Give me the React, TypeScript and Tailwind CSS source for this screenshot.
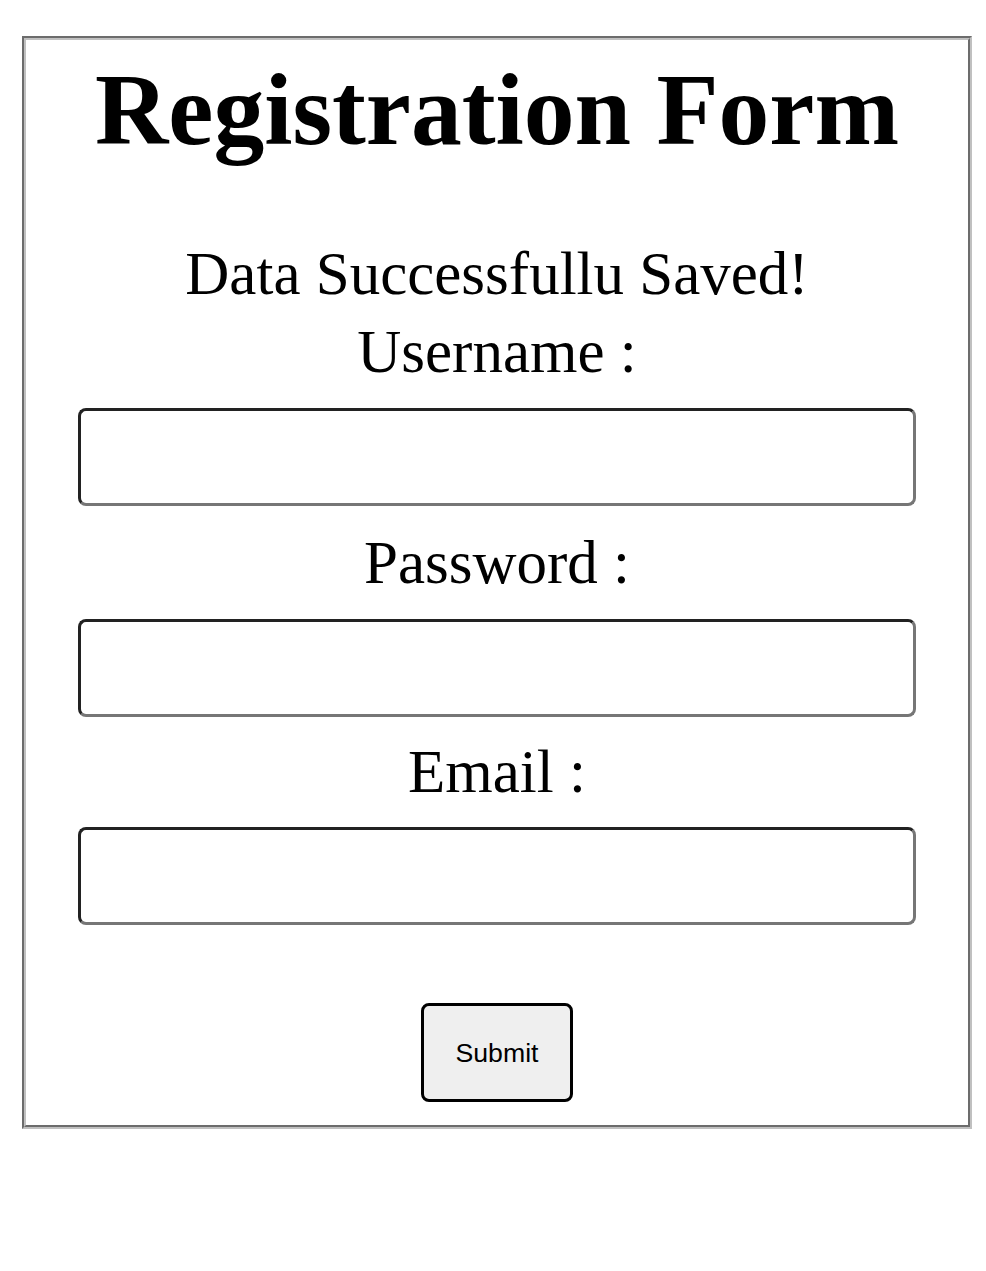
export default function App() {
  const label = "text-[61px] leading-[69px] font-['Liberation_Serif',serif] text-black";
  const input =
    "block w-[838px] h-[98px] rounded-[8px] border-[3px] border-solid border-t-[#222222] border-l-[#222222] border-b-[#767676] border-r-[#767676] bg-white";
  return (
    <div className="pt-[36px] pl-[22px] bg-white min-h-[1271px]">
      <form
        className="w-[950px] border-[4px] [border-style:groove] border-[#c0c0c0] flex flex-col items-center pb-[23px]"
        onSubmit={(e) => e.preventDefault()}
      >
        <h1 className="mt-[12px] text-[101.6px] leading-[115px] font-bold font-['Liberation_Serif',serif] text-black">
          Registration Form
        </h1>
        <p className={`mt-[72px] ${label}`}>Data Successfullu Saved!</p>
        <label className={`mt-[9px] ${label}`}>Username :</label>
        <input type="text" className={`mt-[22px] ${input}`} />
        <label className={`mt-[22px] ${label}`}>Password :</label>
        <input type="password" className={`mt-[22px] ${input}`} />
        <label className={`mt-[20px] ${label}`}>Email :</label>
        <input type="email" className={`mt-[21px] ${input}`} />
        <button
          type="submit"
          className="mt-[78px] w-[152px] h-[99px] rounded-[8px] border-[3px] border-solid border-black bg-[#efefef] text-[26.67px] font-['Liberation_Sans',Arial,sans-serif] text-black"
        >
          Submit
        </button>
      </form>
    </div>
  );
}
